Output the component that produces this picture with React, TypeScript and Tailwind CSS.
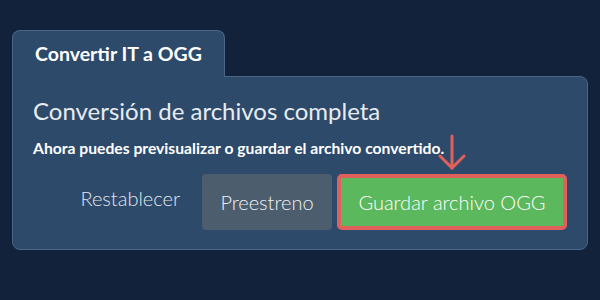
import React from "react";

const App: React.FC = () => {
  return (
    <div className="min-h-screen w-[600px] h-[300px] bg-[#12223a] px-3 pt-[30px] font-['Lato','Noto_Sans',sans-serif]">
      <div className="w-[576px]">
        {/* Tab header */}
        <div className="relative z-10 -mb-px flex h-[47px] w-[213px] items-center rounded-t-lg border border-b-0 border-[#4a6687] bg-[#2d4a6a] pl-[22px]">
          <span className="text-[19.5px] font-bold text-white">Convertir IT a OGG</span>
        </div>

        {/* Panel */}
        <div className="h-[174px] rounded-b-lg rounded-tr-lg border border-[#4a6687] bg-[#2d4a6a] px-[20px] pt-[19px]">
          <h2 className="text-[24px] leading-[30px] text-[#e8ebef]">
            Conversión de archivos completa
          </h2>
          <p className="mt-[12px] text-[15.7px] font-bold leading-[20px] text-white">
            Ahora puedes previsualizar o guardar el archivo convertido.
          </p>

          <div className="mt-[16px] flex items-center justify-end gap-[5px]">
            <button className="h-[56px] pb-[8px] pl-[20px] pr-[17px] text-[20px] font-light text-[#e3e7ec]">
              Restablecer
            </button>
            <button className="h-[56px] w-[130px] rounded-[4px] bg-[#4c5d6e] text-[20px] font-light text-[#eef1f4]">
              Preestreno
            </button>
            <div className="relative">
              <svg
                className="absolute bottom-full left-1/2 mb-[3px] -translate-x-1/2"
                width="30"
                height="38"
                viewBox="0 0 30 38"
                fill="none"
                stroke="#e0605c"
                strokeWidth="3"
                strokeLinecap="round"
                strokeLinejoin="round"
              >
                <path d="M15 3V35" />
                <path d="M3 23L15 35L27 23" />
              </svg>
              <button className="h-[56px] w-[230px] rounded-[5px] border-[4px] border-[#e0605c] bg-[#5cb85c] text-[20px] font-light text-white">
                Guardar archivo OGG
              </button>
            </div>
          </div>
        </div>
      </div>
    </div>
  );
};

export default App;
